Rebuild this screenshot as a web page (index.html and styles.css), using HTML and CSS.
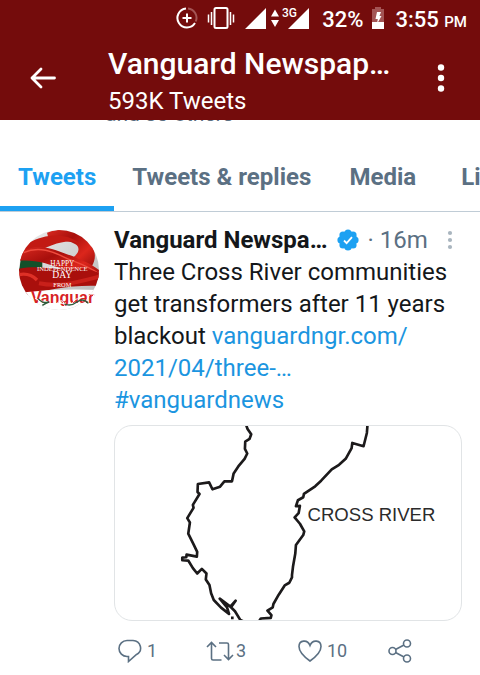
FILE: index.html
```html
<!DOCTYPE html>
<html lang="en">
<head>
    <meta charset="UTF-8">
    <meta name="viewport" content="width=device-width, initial-scale=1.0">
    <title>Vanguard Newspapers</title>
    <link rel="stylesheet" href="styles.css">
</head>
<body>
    <header class="top">
        <!-- Phone status bar -->
        <div class="status">
            <svg width="22" height="22" viewBox="0 0 22 22" fill="none" stroke="#fff" stroke-width="2">
                <path d="M12 1.500A9.500 9.500 0 0 1 19.800 14.500" stroke="#a35454"/>
                <path d="M10 1.500A9.500 9.500 0 1 0 19 16"/>
                <path d="M11 6.500v9M6.500 11h9"/>
            </svg>
            <svg class="vibrate" width="28" height="24" viewBox="0 0 28 24" fill="none" stroke="#fff">
                <rect x="7.500" y="2" width="13" height="20" rx="1.500" stroke-width="2"/>
                <path d="M1.500 8.500v8M4.500 6v13M23.500 6v13M26.500 8.500v8" stroke-width="1.500"/>
            </svg>
            <svg class="signal" width="64" height="24" viewBox="0 0 64 24" fill="#fff">
                <path d="M0 23L21 2V23zM43 23L64 2V23z"/>
                <path d="M26 10.500l4-7 4 7zM26 14l4 7 4-7z"/>
                <path d="M36 0H52V13L46 14H36z" fill="#740c0c"/>
                <text x="37" y="11" class="net">3G</text>
            </svg>
            <span class="percent">32%</span>
            <svg class="battery" width="12" height="22" viewBox="0 0 12 22">
                <path d="M0 2h3V0h6v2h3v13H0z" fill="#a35454"/>
                <path d="M0 15h12v7H0z" fill="#fff"/>
                <path d="M5 5h4L7.500 9H9.500L5 17l.8-5H3.500z" fill="#fff"/>
            </svg>
            <span class="clock">3:55 <small>PM</small></span>
        </div>
        <div class="bar">
            <button class="icon-btn" aria-label="Back">
                <svg width="26" height="22" viewBox="0 0 26 22" fill="none" stroke="#fff" stroke-width="2.800" stroke-linecap="round" stroke-linejoin="round">
                    <path d="M11 2L2 11l9 9M2 11h22.500"/>
                </svg>
            </button>
            <div class="title">
                <h1>Vanguard Newspap…</h1>
                <p>593K Tweets</p>
            </div>
            <button class="icon-btn" aria-label="More options">
                <svg width="8" height="28" viewBox="0 0 8 28" fill="#fff">
                    <circle cx="4" cy="3.500" r="3.200"/><circle cx="4" cy="14" r="3.200"/><circle cx="4" cy="24.500" r="3.200"/>
                </svg>
            </button>
        </div>
    </header>

    <!-- Profile info scrolled under the header -->
    <div class="followed"><span>and 30 others</span></div>

    <nav class="tabs">
        <a href="#tweets" class="active">Tweets</a>
        <a href="#replies">Tweets &amp; replies</a>
        <a href="#media">Media</a>
        <a href="#likes">Likes</a>
    </nav>

    <article class="tweet" id="tweets">
        <svg class="avatar" width="80" height="80" viewBox="0 0 240 240">
            <defs>
                <clipPath id="round"><circle cx="120" cy="120" r="120"/></clipPath>
                <linearGradient id="ribbon" x1="0" y1="0" x2="1" y2="1">
                    <stop offset="0" stop-color="#d92a20"/>
                    <stop offset=".35" stop-color="#a80f0c"/>
                    <stop offset=".65" stop-color="#dc261c"/>
                    <stop offset="1" stop-color="#8c0808"/>
                </linearGradient>
                <linearGradient id="silver" x1="0" y1="0" x2="1" y2="1">
                    <stop offset="0" stop-color="#eee"/>
                    <stop offset="1" stop-color="#b5b5b5"/>
                </linearGradient>
            </defs>
            <g clip-path="url(#round)">
                <rect width="240" height="240" fill="url(#silver)"/>
                <!-- ribbon loop over the top right -->
                <path d="M84 8C140 -14 200 6 222 50C236 86 222 110 200 130L140 90C176 84 190 54 168 42C140 28 116 30 92 38z" fill="url(#ribbon)"/>
                <path d="M0 60C30 34 60 22 90 18C120 14 160 20 180 40C140 24 90 44 0 94z" fill="#c21a13"/>
                <path d="M6 84L70 78V122H0z" fill="#14502a"/>
                <!-- bands across the middle -->
                <path d="M0 70C60 30 110 62 160 78C190 92 215 100 240 120V150C160 140 90 84 0 92z" fill="url(#ribbon)"/>
                <path d="M14 68C70 42 120 76 150 88S210 110 238 130" fill="none" stroke="#ef4b3e" stroke-width="4"/>
                <path d="M0 116C60 104 110 120 160 118S220 122 240 128V168C160 164 80 180 20 196L0 170z" fill="#a90f0c"/>
                <path d="M60 160C120 172 170 158 240 140" fill="none" stroke="#c9201a" stroke-width="12"/>
                <path d="M0 134C20 130 40 136 54 150" fill="none" stroke="#de3026" stroke-width="10"/>
                <path d="M0 188Q120 174 240 180V240H0z" fill="#fff"/>
            </g>
            <g class="greeting">
                <text x="130" y="107" font-size="22">HAPPY</text>
                <text x="130" y="123" font-size="20">INDEPENDENCE</text>
                <text x="130" y="145" font-size="29">DAY</text>
                <text x="130" y="171" font-size="19">FROM</text>
            </g>
            <text x="36" y="220" class="brand">Vanguar</text>
            <path d="M48 204q12 12 26 10t20 8 22-4 20 6 24-6 22 4 20-10 24-8" fill="none" stroke="#fff" stroke-width="3"/>
            <path d="M58 206q12 16 30 10M70 226q12-8 20-10M136 222q20 8 38-6t34 4" fill="none" stroke="#2d5c3c" stroke-width="4"/>
        </svg>

        <div class="content">
            <div class="author">
                <strong>Vanguard Newspa…</strong>
                <svg class="verified" width="22" height="22" viewBox="0 0 22 22">
                    <g fill="#1da1f2">
                        <circle cx="11" cy="11" r="9"/>
                        <circle cx="11" cy="4" r="3.600"/><circle cx="16" cy="6" r="3.600"/>
                        <circle cx="18" cy="11" r="3.600"/><circle cx="16" cy="16" r="3.600"/>
                        <circle cx="11" cy="18" r="3.600"/><circle cx="6" cy="16" r="3.600"/>
                        <circle cx="4" cy="11" r="3.600"/><circle cx="6" cy="6" r="3.600"/>
                    </g>
                    <path d="M7 11.500l2.600 2.600L15 8.200" fill="none" stroke="#fff" stroke-width="1.800"/>
                </svg>
                <span class="time">· 16m</span>
                <button class="icon-btn more" aria-label="Tweet options">
                    <svg width="6" height="20" viewBox="0 0 6 20" fill="#a9b5bf">
                        <circle cx="3" cy="3" r="2.100"/><circle cx="3" cy="10" r="2.100"/><circle cx="3" cy="17" r="2.100"/>
                    </svg>
                </button>
            </div>
            <p class="text">Three Cross River communities get transformers after 11 years blackout <a href="#link">vanguardngr.com/<wbr>2021/04/three-…</a> <a href="#vanguardnews" class="hashtag">#vanguardnews</a></p>

            <div class="card">
                <svg viewBox="12 15 1044 585" fill="none" stroke="#1c1a1b" stroke-width="8" stroke-linejoin="round">
                    <path d="M407 10L412 24L423 40L418 54L405 62L404 84L411 98L403 114L384 137L370 158L365 182L342 182L329 198L306 206L296 185L262 190L261 214L267 220L247 253L249 262L230 293L238 306L233 340L248 370L260 395L259 409L228 403L227 411L215 412L215 420L233 421L247 444L260 460L274 446L288 460L286 478L297 495L302 520L310 540L332 563L356 582L350 562L328 536L360 560L376 542L362 562L374 574L390 600L402 606"/>
                    <path d="M774 10L772 36L762 76L728 66L726 82L708 114L688 132L666 146L634 180L616 197L582 220L580 230L564 239L558 257L570 256L566 278L554 291L570 310L583 333L580 344L558 374L556 400L549 440L546 465L546 472L538 488L524 496L506 524L490 552L488 562L472 572L484 586L482 594L452 596L444 608"/>
                    <path d="M366 590v8"/>
                    <text x="593" y="301" class="place">CROSS RIVER</text>
                </svg>
            </div>

            <div class="actions">
                <button class="action">
                    <svg width="24" height="24" viewBox="0 0 24 24"><path d="M9 1.500h6a8 7.500 0 0 1 3.500 14L10.500 22.500V17.500H9a8 8 0 0 1 0-16z"/></svg>
                    <span>1</span>
                </button>
                <button class="action retweet">
                    <svg width="28" height="24" viewBox="0 0 28 24"><path d="M1 8l4.500-4.500L10 8M5.500 4v15.500q0 1.500 1.500 1.500h8.500M27 16l-4.500 4.500L18 16M22.500 20V5.500q0-1.500-1.500-1.500h-8"/></svg>
                    <span>3</span>
                </button>
                <button class="action">
                    <svg width="24" height="24" viewBox="0 0 24 24"><path d="M12 22C5 17 1 12 1 7.500C1 1 9.500 0 12 6.500C14.500 0 23 1 23 7.500C23 12 19 17 12 22z"/></svg>
                    <span>10</span>
                </button>
                <button class="action" aria-label="Share">
                    <svg width="24" height="24" viewBox="0 0 24 24"><circle cx="4.500" cy="12" r="3.500"/><circle cx="19" cy="4.500" r="3.500"/><circle cx="19" cy="19.500" r="3.500"/><path d="M7.500 10.500L16 6M7.500 13.500L16 18"/></svg>
                </button>
            </div>
        </div>
    </article>
</body>
</html>
```
FILE: styles.css
```css
body {
    font-family: Roboto, sans-serif;
    background-color: #fff;
    color: #14171a;
    margin: 0;
    overflow-x: hidden;
}
svg {
    display: block;
    flex: none;
}
.top {
    background-color: #740c0c;
    color: #fff;
}
/* Status bar */
.status {
    display: flex;
    justify-content: flex-end;
    align-items: center;
    height: 36px;
    padding-right: 13px;
    font-size: 22px;
    font-weight: 500;
}
.status small {
    font-size: 15px;
}
.vibrate {
    margin-left: 9px;
}
.signal {
    margin-left: 10px;
}
.net {
    font-size: 12px;
    font-weight: 500;
}
.percent {
    margin-left: 13px;
}
.clock,
.percent {
    padding-top: 3px;
}
.battery {
    margin: 0 12px 0 8px;
}
/* Title bar */
.bar {
    display: flex;
    align-items: center;
    height: 84px;
    padding: 0 35px 0 30px;
}
.icon-btn {
    background: none;
    border: none;
    padding: 0;
    cursor: pointer;
}
.title {
    flex: 1;
    padding: 8px 0 0 52px;
    white-space: nowrap;
}
.title h1 {
    font-size: 30px;
    font-weight: 500;
    line-height: 38px;
    margin: 0;
}
.title p {
    font-size: 24px;
    line-height: 36px;
    margin: 0;
}
.followed {
    display: flex;
    align-items: flex-end;
    height: 6px;
    overflow: hidden;
    padding-left: 105px;
    color: #5b7083;
    font-size: 21px;
    line-height: 24px;
}
/* Tabs */
.tabs {
    display: flex;
    height: 85px;
    border-bottom: 1px solid #c0ccd6;
    overflow: hidden;
}
.tabs a {
    box-sizing: border-box;
    flex: none;
    min-width: 107px;
    padding: 0 18px;
    color: #5b7083;
    font-size: 24px;
    font-weight: 700;
    line-height: 102px;
    text-align: center;
    text-decoration: none;
}
.tabs .active {
    color: #1da1f2;
    border-bottom: 5px solid #1da1f2;
}
/* Tweet */
.tweet {
    display: flex;
    gap: 15px;
    padding: 12px 18px 12px 19px;
}
.avatar {
    margin-top: 6px;
    overflow: visible;
}
.greeting {
    fill: #fff;
    font-family: "Liberation Serif", serif;
    text-anchor: middle;
}
.brand {
    fill: #d81f26;
    font-family: "Liberation Sans", sans-serif;
    font-size: 48px;
    font-weight: 700;
}
.content {
    flex: 1;
    min-width: 0;
}
.author {
    display: flex;
    align-items: center;
    height: 32px;
    font-size: 24px;
    white-space: nowrap;
}
.verified {
    margin: 0 8px 0 10px;
}
.time {
    color: #5b7083;
}
.more {
    margin-left: auto;
    margin-right: 9px;
}
.text {
    font-size: 24px;
    line-height: 32px;
    margin: 0;
}
.text a {
    color: #1b95e0;
    text-decoration: none;
}
.text .hashtag {
    display: block;
}
.card {
    border: 1px solid #e1e4e6;
    border-radius: 18px;
    overflow: hidden;
    margin-top: 9px;
}
.card svg {
    width: 100%;
}
.place {
    fill: #2b2b2b;
    stroke: none;
    font-family: "Liberation Sans", sans-serif;
    font-size: 56px;
}
/* Actions */
.actions {
    display: grid;
    grid-template-columns: 88px 92px 90px auto;
    padding: 18px 4px 0;
}
.action {
    display: flex;
    align-items: center;
    gap: 5px;
    background: none;
    border: none;
    padding: 0;
    color: #5b7083;
    font-family: inherit;
    font-size: 18px;
    cursor: pointer;
}
.retweet {
    gap: 2px;
}
.action svg {
    fill: none;
    stroke: #5b7083;
    stroke-width: 1.600;
}
```
